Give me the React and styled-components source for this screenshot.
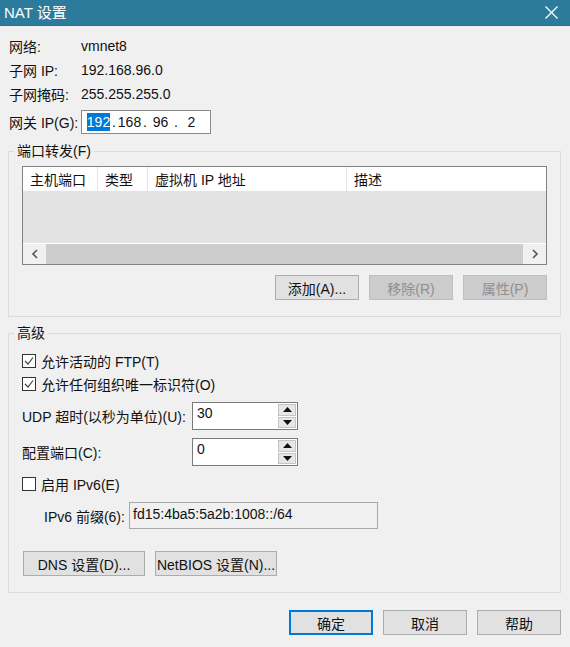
import React from "react";
import styled, { createGlobalStyle } from "styled-components";

const GlobalStyle = createGlobalStyle`
  html, body {
    margin: 0;
    padding: 0;
    background: #f0f0f0;
  }
  body {
    font-family: "Liberation Sans", "Noto Sans CJK SC", sans-serif;
    font-size: 14px;
    color: #111;
  }
  * { box-sizing: border-box; }
`;

const Check = () => (
  <svg width="12" height="12" viewBox="0 0 12 12">
    <polyline points="2,6 5,9 10,2.5" fill="none" stroke="#444" strokeWidth="1.2" />
  </svg>
);

const Chevron = ({ dir }) => (
  <svg width="8" height="10" viewBox="0 0 8 10">
    <polyline
      points={dir === "left" ? "6,1 2,5 6,9" : "2,1 6,5 2,9"}
      fill="none"
      stroke="#555"
      strokeWidth="1.6"
    />
  </svg>
);

const Triangle = ({ up }) => (
  <svg width="9" height="5" viewBox="0 0 9 5">
    <polygon points={up ? "0,5 4.5,0 9,5" : "0,0 9,0 4.5,5"} fill="#111" />
  </svg>
);

const App = () => {
  return (
    <Window>
      <GlobalStyle />
      <TitleBar>
        <Title>NAT 设置</Title>
        <CloseButton>
          <svg width="13" height="13" viewBox="0 0 13 13">
            <line x1="0.5" y1="0.5" x2="12.5" y2="12.5" stroke="#fff" strokeWidth="1.2" />
            <line x1="12.5" y1="0.5" x2="0.5" y2="12.5" stroke="#fff" strokeWidth="1.2" />
          </svg>
        </CloseButton>
      </TitleBar>

      <InfoBlock>
        <InfoRow>
          <InfoLabel>网络:</InfoLabel>
          <span>vmnet8</span>
        </InfoRow>
        <InfoRow>
          <InfoLabel>子网 IP:</InfoLabel>
          <span>192.168.96.0</span>
        </InfoRow>
        <InfoRow>
          <InfoLabel>子网掩码:</InfoLabel>
          <span>255.255.255.0</span>
        </InfoRow>
        <GatewayRow>
          <InfoLabel>网关 IP(G):</InfoLabel>
          <IpBox>
            <IpSeg><Selected>192</Selected></IpSeg>
            <IpDot>.</IpDot>
            <IpSeg>168</IpSeg>
            <IpDot>.</IpDot>
            <IpSeg>96</IpSeg>
            <IpDot>.</IpDot>
            <IpSeg>2</IpSeg>
          </IpBox>
        </GatewayRow>
      </InfoBlock>

      <Group $top={8}>
        <GroupLegend>端口转发(F)</GroupLegend>
        <ListView>
          <HeaderRow>
            <HeaderCell $w={75}>主机端口</HeaderCell>
            <HeaderCell $w={50}>类型</HeaderCell>
            <HeaderCell $w={199}>虚拟机 IP 地址</HeaderCell>
            <HeaderCell $last>描述</HeaderCell>
          </HeaderRow>
          <ListBody />
          <HScroll>
            <ScrollArrow><Chevron dir="left" /></ScrollArrow>
            <ScrollThumb />
            <ScrollArrow><Chevron dir="right" /></ScrollArrow>
          </HScroll>
        </ListView>
        <ButtonRow $top={10}>
          <Button>添加(A)...</Button>
          <Button $disabled>移除(R)</Button>
          <Button $disabled>属性(P)</Button>
        </ButtonRow>
      </Group>

      <Group $top={7} $bottom={16}>
        <GroupLegend>高级</GroupLegend>
        <CheckRow $top={9}>
          <CheckBox><Check /></CheckBox>
          <span>允许活动的 FTP(T)</span>
        </CheckRow>
        <CheckRow $top={3}>
          <CheckBox><Check /></CheckBox>
          <span>允许任何组织唯一标识符(O)</span>
        </CheckRow>
        <SpinRow>
          <SpinLabel>UDP 超时(以秒为单位)(U):</SpinLabel>
          <SpinBox>
            <SpinInput>30</SpinInput>
            <SpinButtons>
              <SpinBtn><Triangle up /></SpinBtn>
              <SpinBtn><Triangle /></SpinBtn>
            </SpinButtons>
          </SpinBox>
        </SpinRow>
        <SpinRow>
          <SpinLabel>配置端口(C):</SpinLabel>
          <SpinBox>
            <SpinInput>0</SpinInput>
            <SpinButtons>
              <SpinBtn><Triangle up /></SpinBtn>
              <SpinBtn><Triangle /></SpinBtn>
            </SpinButtons>
          </SpinBox>
        </SpinRow>
        <CheckRow $top={8}>
          <CheckBox />
          <span>启用 IPv6(E)</span>
        </CheckRow>
        <PrefixRow>
          <PrefixLabel>IPv6 前缀(6):</PrefixLabel>
          <PrefixInput>fd15:4ba5:5a2b:1008::/64</PrefixInput>
        </PrefixRow>
        <ButtonRow $top={22} $start>
          <Button $w={122}>DNS 设置(D)...</Button>
          <Button $w={122}>NetBIOS 设置(N)...</Button>
        </ButtonRow>
      </Group>

      <Footer>
        <Button $default>确定</Button>
        <Button>取消</Button>
        <Button>帮助</Button>
      </Footer>
    </Window>
  );
};

const Window = styled.div`
  width: 570px;
  height: 647px;
  background: #f0f0f0;
  display: flex;
  flex-direction: column;
  overflow: hidden;
`;

const TitleBar = styled.div`
  height: 26px;
  background: #2d7b9a;
  border-bottom: 1px solid #296f8b;
  display: flex;
  align-items: center;
  justify-content: space-between;
  padding: 0 12px 2px 4px;
`;

const Title = styled.div`
  color: #fff;
  font-size: 15px;
`;

const CloseButton = styled.div`
  display: flex;
  align-items: center;
  margin-top: 2px;
`;

const InfoBlock = styled.div`
  padding: 8px 0 0 9px;
`;

const InfoRow = styled.div`
  height: 24px;
  display: flex;
  align-items: center;
`;

const GatewayRow = styled(InfoRow)`
  margin-top: 3px;
  height: 25px;
`;

const InfoLabel = styled.span`
  width: 72px;
  flex-shrink: 0;
`;

const IpBox = styled.div`
  width: 130px;
  height: 24px;
  border: 1px solid #8a8a8a;
  background: #fff;
  display: flex;
  align-items: center;
  padding-left: 4px;
`;

const IpSeg = styled.span`
  width: 25px;
  text-align: center;
`;

const IpDot = styled.span`
  width: 6px;
  text-align: center;
`;

const Selected = styled.span`
  background: #0078d7;
  color: #fff;
  padding: 1px 0;
`;

const Group = styled.fieldset`
  margin: ${(p) => p.$top}px 9px 0 8px;
  padding: 0 13px ${(p) => p.$bottom || 16}px 13px;
  border: 1px solid #dcdcdc;
  min-width: 0;
`;

const GroupLegend = styled.legend`
  margin-left: -8px;
  padding: 0 3px;
  line-height: 18px;
`;

const ListView = styled.div`
  margin-top: 6px;
  height: 99px;
  border: 1px solid #828282;
  display: flex;
  flex-direction: column;
`;

const HeaderRow = styled.div`
  height: 24px;
  background: #fff;
  display: flex;
`;

const HeaderCell = styled.div`
  width: ${(p) => (p.$last ? "auto" : `${p.$w}px`)};
  flex: ${(p) => (p.$last ? 1 : "none")};
  border-right: ${(p) => (p.$last ? "none" : "1px solid #e5e5e5")};
  padding-left: 7px;
  display: flex;
  align-items: center;
`;

const ListBody = styled.div`
  height: 52px;
  background: #e3e3e3;
`;

const HScroll = styled.div`
  flex: 1;
  border-top: 1px solid #fff;
  display: flex;
  background: #f0f0f0;
`;

const ScrollArrow = styled.div`
  width: 23px;
  display: flex;
  align-items: center;
  justify-content: center;
`;

const ScrollThumb = styled.div`
  flex: 1;
  background: #cdcdcd;
`;

const ButtonRow = styled.div`
  margin-top: ${(p) => p.$top}px;
  display: flex;
  justify-content: ${(p) => (p.$start ? "flex-start" : "flex-end")};
  gap: 10px;
  padding-left: ${(p) => (p.$start ? 1 : 0)}px;
`;

const Button = styled.div`
  width: ${(p) => p.$w || 84}px;
  height: 25px;
  display: flex;
  align-items: center;
  justify-content: center;
  background: ${(p) => (p.$disabled ? "#cccccc" : "#e1e1e1")};
  border: 1px solid ${(p) => (p.$default ? "#0078d7" : p.$disabled ? "#bfbfbf" : "#adadad")};
  box-shadow: ${(p) => (p.$default ? "inset 0 0 0 1px #0078d7" : "none")};
  color: ${(p) => (p.$disabled ? "#8f8f8f" : "#111")};
`;

const CheckRow = styled.div`
  margin-top: ${(p) => p.$top}px;
  height: 20px;
  display: flex;
  align-items: center;
  gap: 5px;
`;

const CheckBox = styled.div`
  width: 14px;
  height: 14px;
  border: 1px solid #333;
  background: #fff;
  display: flex;
  align-items: center;
  justify-content: center;
`;

const SpinRow = styled.div`
  margin-top: 8px;
  height: 28px;
  display: flex;
  align-items: center;
`;

const SpinLabel = styled.span`
  width: 170px;
  flex-shrink: 0;
`;

const SpinBox = styled.div`
  width: 106px;
  height: 28px;
  border: 1px solid #7a7a7a;
  background: #fff;
  display: flex;
`;

const SpinInput = styled.div`
  flex: 1;
  padding: 2px 0 0 4px;
`;

const SpinButtons = styled.div`
  width: 19px;
  display: flex;
  flex-direction: column;
  gap: 1px;
  padding: 1px 1px 1px 0;
`;

const SpinBtn = styled.div`
  flex: 1;
  background: #e6e6e6;
  border: 1px solid #c4c4c4;
  display: flex;
  align-items: center;
  justify-content: center;
`;

const PrefixRow = styled.div`
  margin-top: 8px;
  height: 27px;
  display: flex;
  align-items: center;
  padding-left: 22px;
`;

const PrefixLabel = styled.span`
  width: 85px;
  flex-shrink: 0;
`;

const PrefixInput = styled.div`
  width: 249px;
  height: 27px;
  border: 1px solid #a8a8a8;
  background: #f0f0f0;
  padding: 3px 0 0 3px;
`;

const Footer = styled.div`
  margin-top: 17px;
  padding-right: 9px;
  display: flex;
  justify-content: flex-end;
  gap: 10px;
`;

export default App;
